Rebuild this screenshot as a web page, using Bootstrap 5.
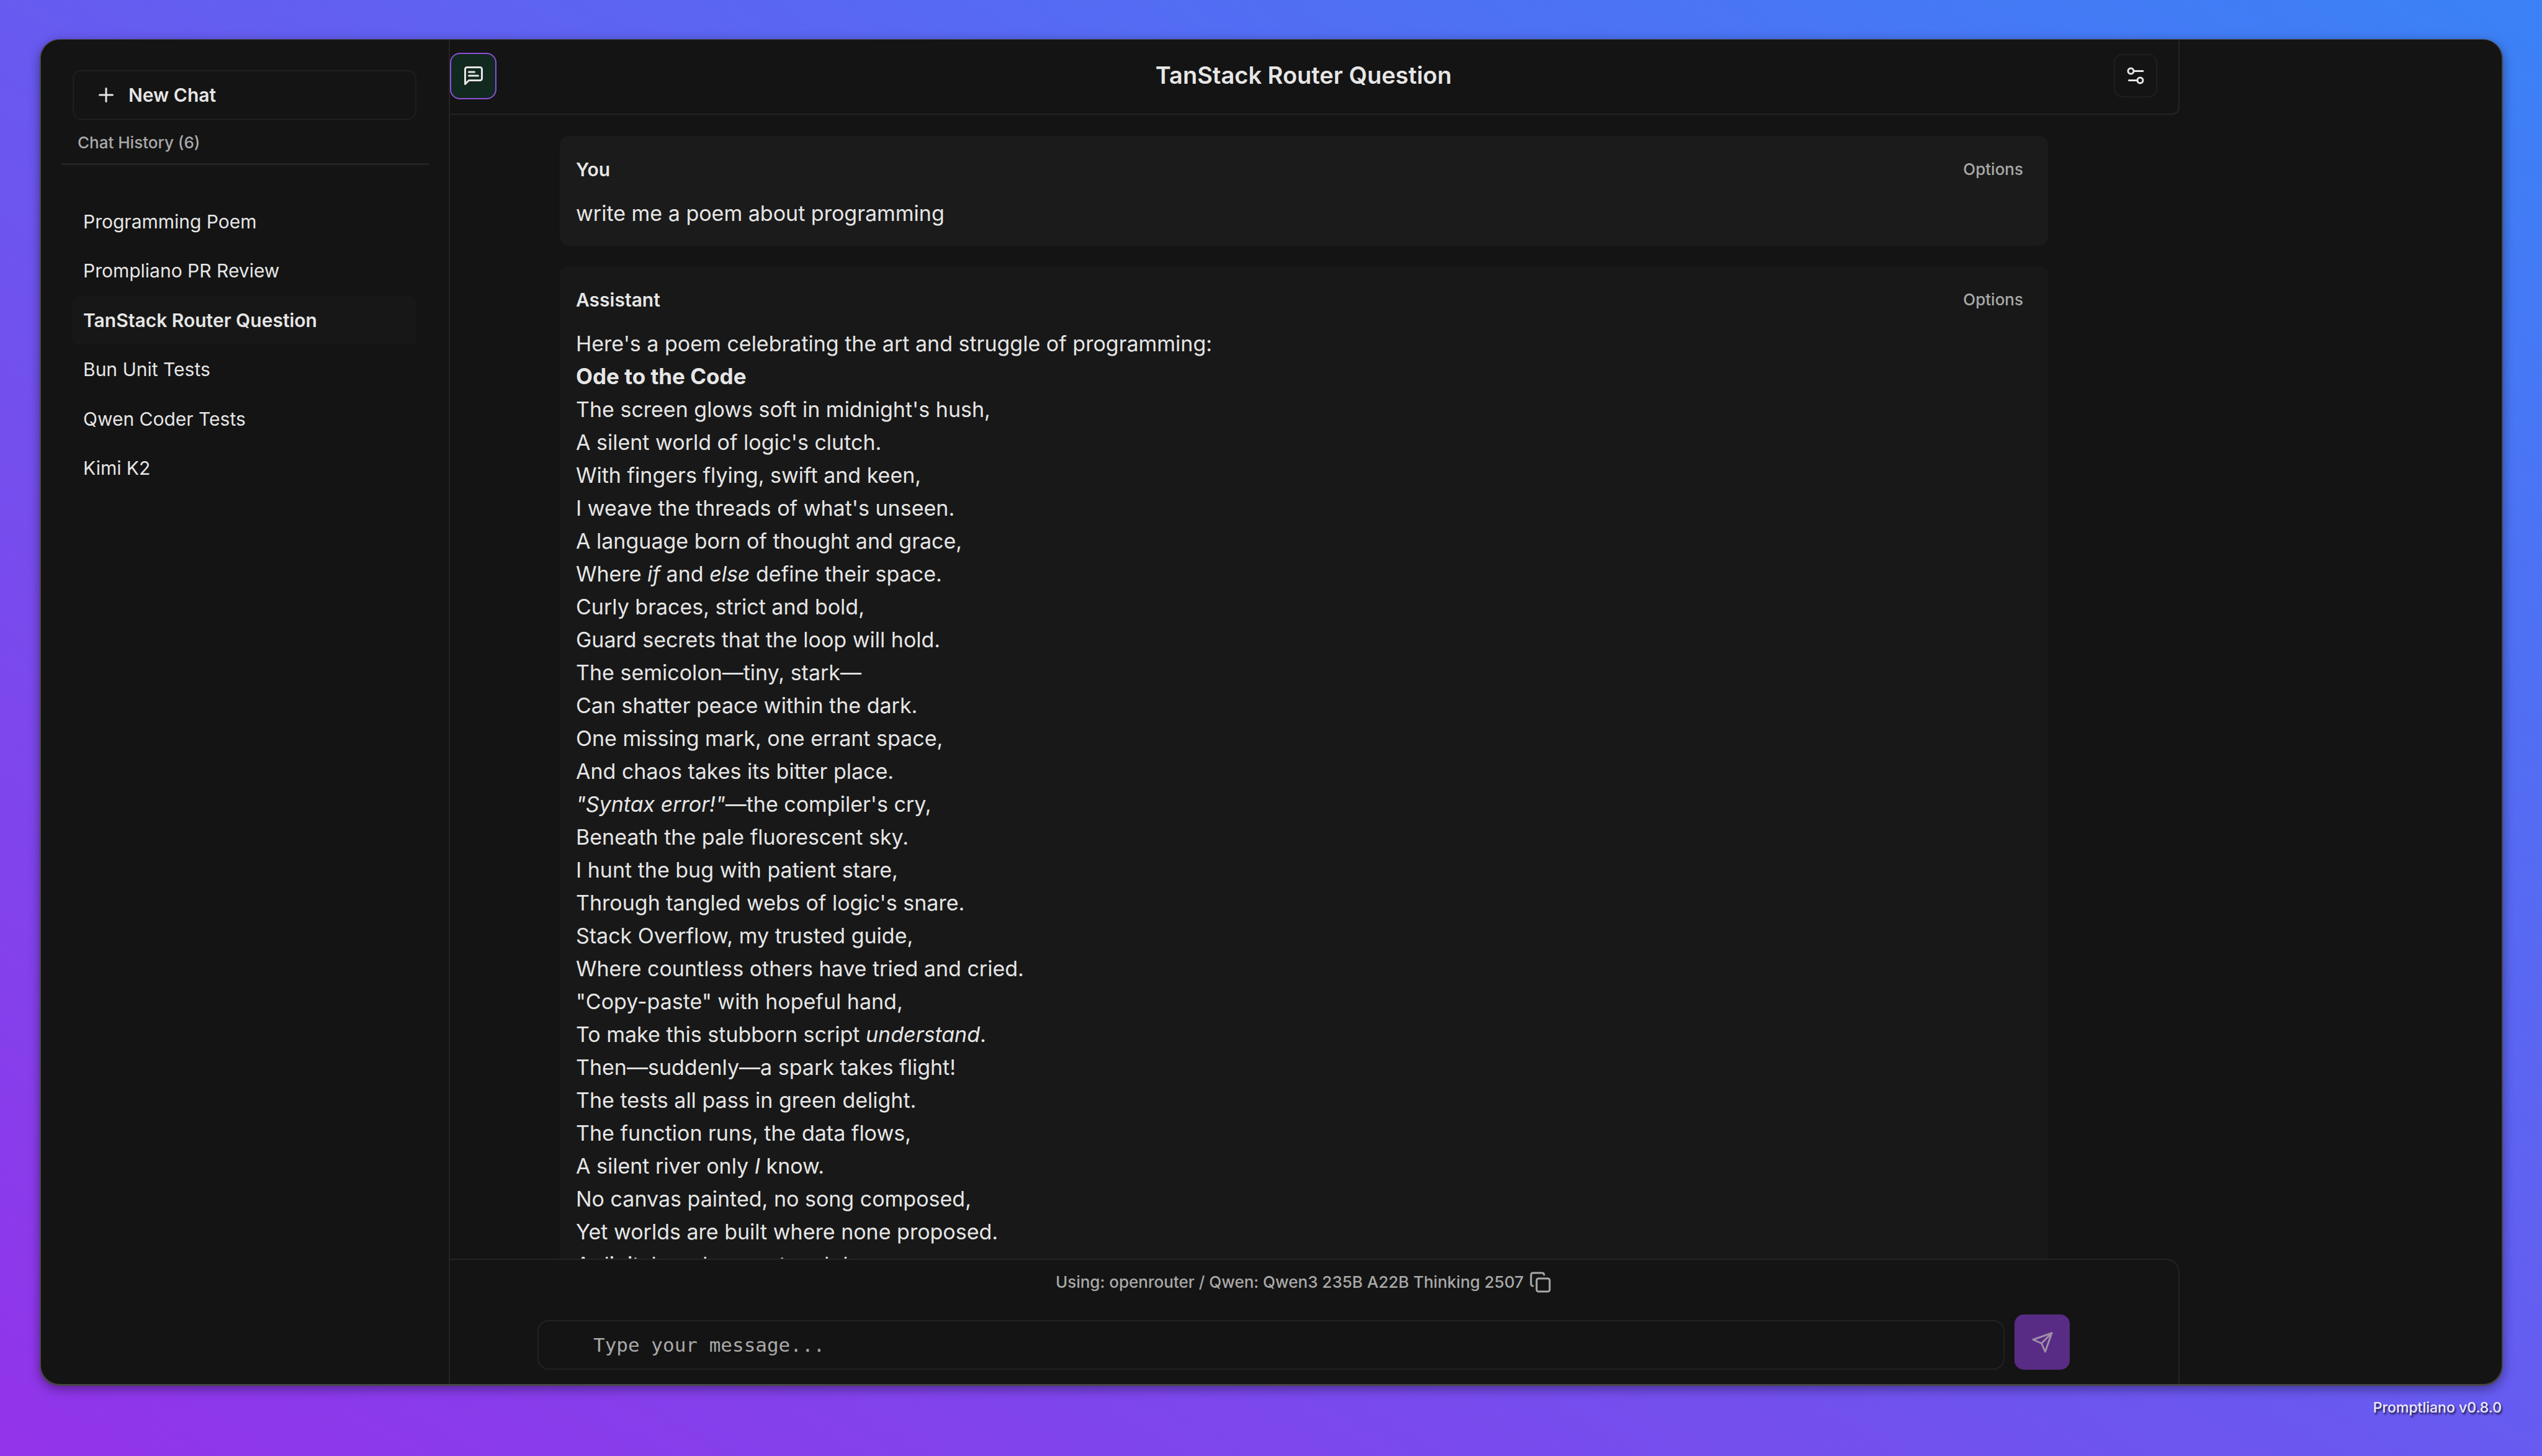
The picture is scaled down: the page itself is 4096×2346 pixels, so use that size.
<!DOCTYPE html>
<html lang="en">
<head>
<meta charset="utf-8">
<title>TanStack Router Question</title>
<meta name="viewport" content="width=device-width, initial-scale=1">
<link href="https://cdn.jsdelivr.net/npm/bootstrap@5.3.0/dist/css/bootstrap.min.css" rel="stylesheet">
<script src="https://cdn.jsdelivr.net/npm/bootstrap@5.3.0/dist/js/bootstrap.bundle.min.js"></script>
<style>
:root { --line: #242424; --ink: #e6e6e6; --dim: #a9a9a9; --panel: #141414; }
body { font-family: Inter, "Noto Sans", sans-serif; color: var(--ink); background: linear-gradient(to top right, #9333ea, #3b82f6); padding: 64px 65px 0 66px; }
svg { fill: none; stroke: currentColor; stroke-width: 2; stroke-linecap: round; stroke-linejoin: round; width: 36px; height: 36px; flex: none; display: block; }
.app-panel { background: var(--panel); border-radius: 30px; box-shadow: 0 1px 0 2px #484646, 0 6px 18px 2px rgba(0,0,0,.4); min-height: 0; }
.side { width: 659px; border-right: 2px solid var(--line); padding: 49px 32px 0 33px; }
.new-chat { height: 80px; margin: 0 20px 0 18px; border: 2px solid #1f1f1f; border-radius: 14px; padding: 0 34px; gap: 18px; font-size: 30px; font-weight: 600; color: var(--ink); }
.hist-label { font-size: 26px; line-height: 40px; color: var(--dim); padding: 17px 26px 13px; border-bottom: 3px solid var(--line); margin: 0; font-weight: 500; }
.hist-list { height: 475px; margin: 52px 20px 0 17px; }
.hist-list a { height: 78px; line-height: 78px; padding: 0 18px; font-size: 30px; color: var(--ink); border-radius: 10px; }
.hist-list a.current { background: #171717; font-weight: 600; }
.spare { width: 519px; }
.chat-col { min-width: 0; }
.chat-head { height: 121px; border: solid var(--line); border-width: 0 2px 2px 0; border-radius: 0 0 12px 0; padding: 0 34px 3px 0; }
.chat-head h1 { font-size: 38px; font-weight: 600; }
.head-end { width: 75px; }
.sq { width: 70px; height: 70px; border: 2px solid #1f1f1f; border-radius: 14px; color: var(--ink); }
.sq-on { width: 75px; height: 75px; background: #12291f; border: 2px solid #8b50d8; border-radius: 16px; }
.feed { min-height: 0; padding: 34px 212px 0 177px; gap: 33px; }
.msg { flex: none; padding: 34px 26px 26px; border-radius: 14px; background: #181818; }
.msg-user { background: #1b1b1b; }
.msg-head { height: 40px; margin-bottom: 24px; padding-right: 14px; }
.msg-head h2 { font-size: 30px; font-weight: 600; line-height: 40px; margin: 0; }
.opt { font-size: 26px; font-weight: 500; color: var(--dim); line-height: 40px; }
.msg p { font-size: 34px; line-height: 53px; margin: 0; }
.msg strong { font-size: 35px; font-weight: 700; line-height: 1; }
.composer { height: 202px; border: solid var(--line); border-width: 2px 2px 0 0; border-radius: 0 22px 0 0; padding: 14px 175px 23px 141px; }
.model { font-size: 26px; font-weight: 500; line-height: 44px; color: var(--dim); gap: 9px; }
.model button { color: var(--dim); }
.send-row { gap: 16px; }
.ask { height: 80px; border: 2px solid #222; border-radius: 18px; background: transparent; padding: 0 88px; font-family: "DejaVu Sans Mono", monospace; font-size: 31px; color: var(--ink); }
.ask::placeholder { color: var(--dim); opacity: 1; }
.send { width: 89px; height: 89px; border-radius: 15px; background: #582b85; color: #a08ea6; }
.version { height: 116px; padding-top: 20px; font-size: 23px; font-weight: 500; line-height: 36px; text-shadow: 2px 3px 3px rgba(0,0,0,.7); color: #eeeafc; }
</style>
</head>
<body class="vh-100 d-flex flex-column overflow-hidden">
<div class="app-panel d-flex flex-grow-1">
  <aside class="side flex-shrink-0">
    <div class="d-grid"><button type="button" class="btn new-chat d-flex align-items-center">
      <svg viewBox="0 0 24 24" aria-hidden="true"><path d="M5 12h14M12 5v14"/></svg>New Chat</button></div>
    <h2 class="hist-label">Chat History (6)</h2>
    <nav class="hist-list d-flex flex-column justify-content-between">
      <a href="#" class="text-decoration-none">Programming Poem</a>
      <a href="#" class="text-decoration-none">Prompliano PR Review</a>
      <a href="#" class="text-decoration-none current" aria-current="page">TanStack Router Question</a>
      <a href="#" class="text-decoration-none">Bun Unit Tests</a>
      <a href="#" class="text-decoration-none">Qwen Coder Tests</a>
      <a href="#" class="text-decoration-none">Kimi K2</a>
    </nav>
  </aside>
  <main class="chat-col flex-grow-1 d-flex flex-column">
    <header class="chat-head d-flex align-items-center justify-content-between flex-shrink-0">
      <button type="button" class="btn sq sq-on p-0 d-flex align-items-center justify-content-center" aria-label="Toggle chat list">
        <svg viewBox="0 0 24 24"><path d="M21 15a2 2 0 0 1-2 2H7l-4 4V5a2 2 0 0 1 2-2h14a2 2 0 0 1 2 2z"/><path d="M13 8H7M17 12H7"/></svg></button>
      <h1 class="m-0">TanStack Router Question</h1>
      <div class="head-end d-flex justify-content-end">
        <button type="button" class="btn sq p-0 d-flex align-items-center justify-content-center" aria-label="Model settings">
          <svg viewBox="0 0 24 24"><path d="M20 7h-9M14 17H5"/><circle cx="17" cy="17" r="3"/><circle cx="7" cy="7" r="3"/></svg></button>
      </div>
    </header>
    <div class="feed flex-grow-1 d-flex flex-column overflow-hidden">
      <article class="msg msg-user">
        <div class="msg-head d-flex justify-content-between"><h2>You</h2><button type="button" class="btn border-0 p-0 opt">Options</button></div>
        <p>write me a poem about programming</p>
      </article>
      <article class="msg">
        <div class="msg-head d-flex justify-content-between"><h2>Assistant</h2><button type="button" class="btn border-0 p-0 opt">Options</button></div>
        <p>Here's a poem celebrating the art and struggle of programming:<br>
        <strong>Ode to the Code</strong><br>
        The screen glows soft in midnight's hush,<br>
        A silent world of logic's clutch.<br>
        With fingers flying, swift and keen,<br>
        I weave the threads of what's unseen.<br>
        A language born of thought and grace,<br>
        Where <em>if</em> and <em>else</em> define their space.<br>
        Curly braces, strict and bold,<br>
        Guard secrets that the loop will hold.<br>
        The semicolon—tiny, stark—<br>
        Can shatter peace within the dark.<br>
        One missing mark, one errant space,<br>
        And chaos takes its bitter place.<br>
        <em>"Syntax error!"</em>—the compiler's cry,<br>
        Beneath the pale fluorescent sky.<br>
        I hunt the bug with patient stare,<br>
        Through tangled webs of logic's snare.<br>
        Stack Overflow, my trusted guide,<br>
        Where countless others have tried and cried.<br>
        "Copy-paste" with hopeful hand,<br>
        To make this stubborn script <em>understand</em>.<br>
        Then—suddenly—a spark takes flight!<br>
        The tests all pass in green delight.<br>
        The function runs, the data flows,<br>
        A silent river only <em>I</em> know.<br>
        No canvas painted, no song composed,<br>
        Yet worlds are built where none proposed.<br>
        A digital garden, vast and deep,</p>
      </article>
    </div>
    <form class="composer flex-shrink-0 d-flex flex-column justify-content-between">
      <div class="model d-flex align-items-center justify-content-center"><span>Using: openrouter / Qwen: Qwen3 235B A22B Thinking 2507</span>
        <button type="button" class="btn border-0 p-0" aria-label="Copy model name"><svg viewBox="0 0 24 24"><rect x="8" y="8" width="14" height="14" rx="2"/><path d="M4 16c-1.1 0-2-.9-2-2V4c0-1.1.9-2 2-2h10c1.1 0 2 .9 2 2"/></svg></button></div>
      <div class="send-row d-flex align-items-end">
        <input type="text" class="ask flex-grow-1" aria-label="Message" placeholder="Type your message...">
        <button type="button" class="btn send border-0 p-0 d-flex align-items-center justify-content-center" aria-label="Send message">
          <svg viewBox="0 0 24 24"><path d="m22 2-7 20-4-9-9-4Z"/><path d="M22 2 11 13"/></svg></button>
      </div>
    </form>
  </main>
  <div class="spare flex-shrink-0"></div>
</div>
<footer class="version text-end flex-shrink-0">Promptliano v0.8.0</footer>
</body>
</html>
